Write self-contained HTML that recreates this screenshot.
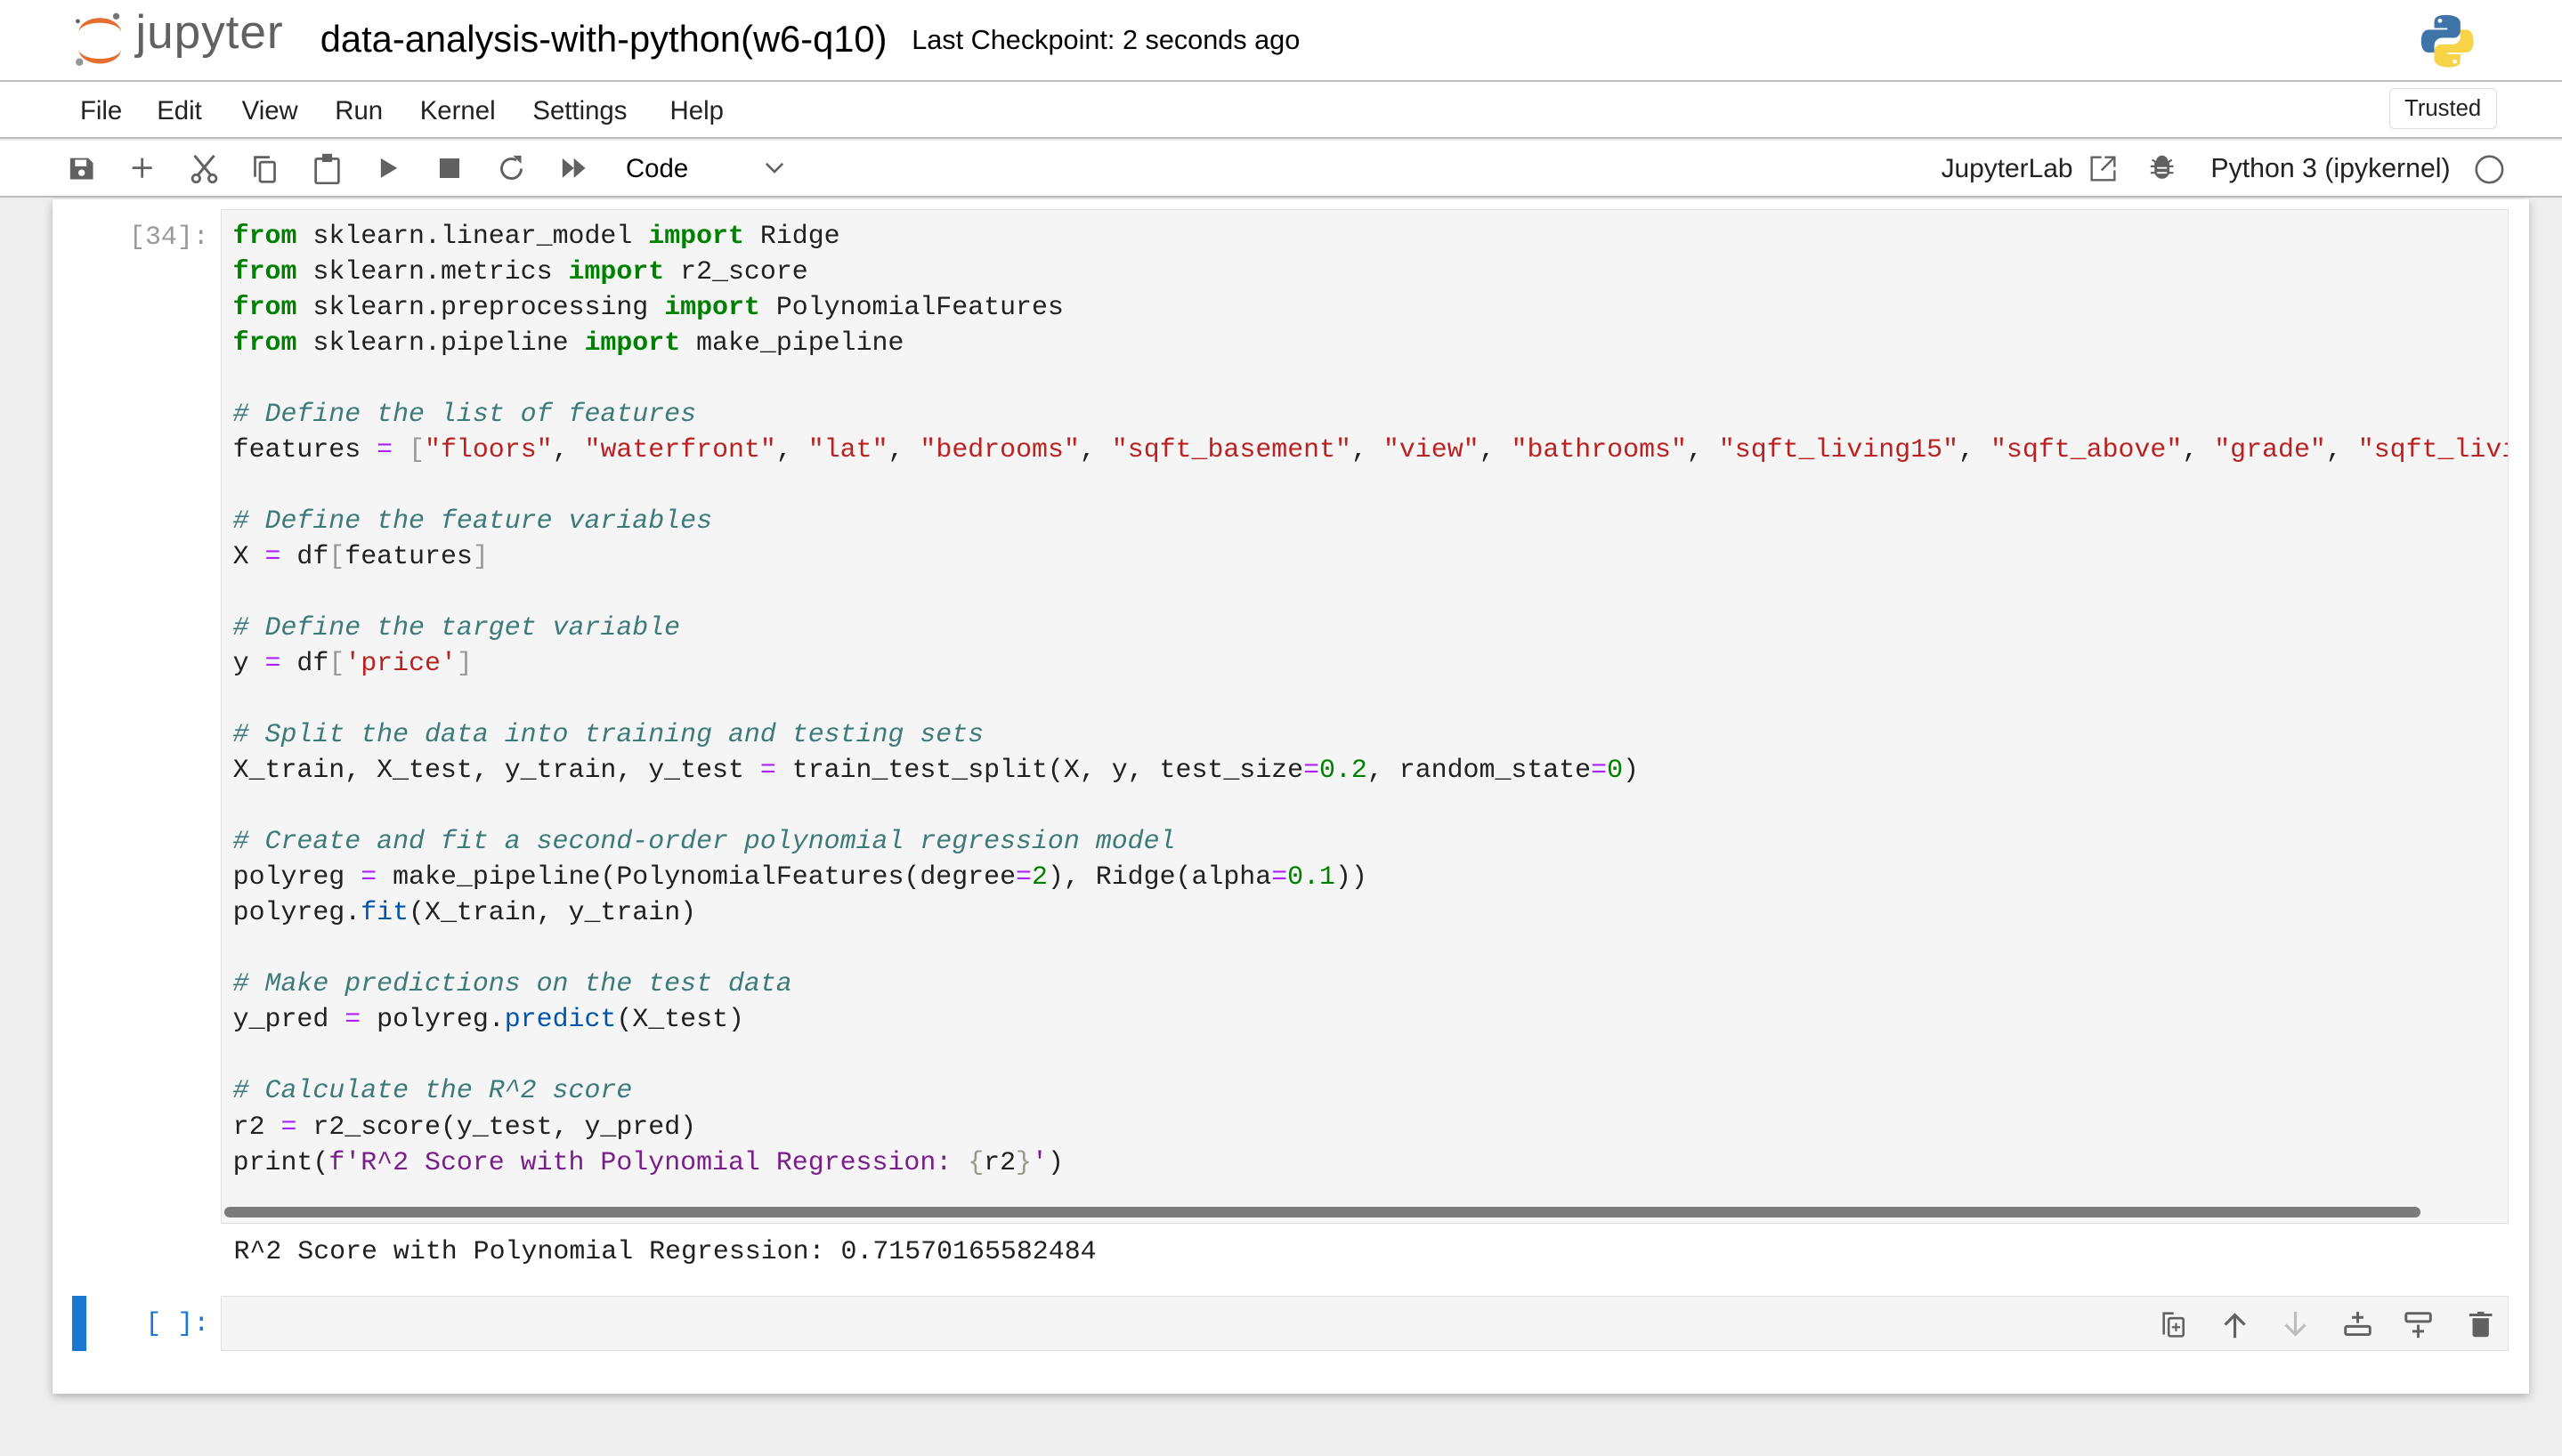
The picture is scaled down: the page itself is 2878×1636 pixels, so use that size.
<!DOCTYPE html>
<html><head><meta charset="utf-8"><style>
html,body{margin:0;padding:0}
body{width:1568px;height:891.4px;zoom:1.8355;background:#eee;position:relative;overflow:hidden;font-family:"Liberation Sans",sans-serif;color:#000}
.a{position:absolute}
.hdr{left:0;top:0;width:1568px;height:49px;background:#fff;border-bottom:1.5px solid #bdbdbd}
.menu{left:0;top:50px;width:1568px;height:34px;background:#fff;border-bottom:1.5px solid #bdbdbd}
.tb{left:0;top:86px;width:1568px;height:34px;background:#fff;border-bottom:1.5px solid #bdbdbd}
.menu span{position:absolute;top:9px;font-size:16px;color:#222}
.panel{left:32px;top:122px;width:1516px;height:731px;background:#fff;box-shadow:0 2px 5px rgba(0,0,0,.25)}
.cell{left:135px;top:128px;width:1399px;height:620px;background:#f5f5f5;border:1px solid #e0e0e0;overflow:hidden}
pre{margin:0;font-family:"Liberation Mono",monospace;font-size:16.3px;line-height:21.8px;color:#212121}
.k{color:#008000;font-weight:bold}.s{color:#ba2121}.c{color:#3d7a7a;font-style:italic}.o{color:#aa22ff}.n{color:#008000}.p{color:#0055aa}.g{color:#999}.f{color:#7a1f8a}.b{color:#998}
svg{position:absolute}
</style></head><body>
<div class="a hdr"></div>
<svg style="left:44px;top:6px" width="34" height="36" viewBox="0 0 34 36"><path d="M4 14 A13 9 0 0 1 30 14 A13 6 0 0 0 4 14Z" fill="#e46e2e"/><path d="M4 24 A13 9 0 0 0 30 24 A13 6 0 0 1 4 24Z" fill="#e46e2e"/><circle cx="27" cy="4" r="2" fill="#767677"/><circle cx="4.5" cy="32" r="2.3" fill="#989798"/><circle cx="3.5" cy="7" r="1.3" fill="#616262"/></svg>
<div class="a" style="left:83px;top:3px;font-size:29px;color:#616161;letter-spacing:.5px">jupyter</div>
<div class="a" style="left:196px;top:11px;font-size:22.7px">data-analysis-with-python(w6-q10)</div>
<div class="a" style="left:558px;top:15px;font-size:16.7px">Last Checkpoint: 2 seconds ago</div>
<svg style="left:1481px;top:8px" width="34" height="34" viewBox="0 0 34 34"><path d="M16 1C9 1 9 4 9 6v3h8v1H6c-3 0-5 2-5 7s2 7 5 7h3v-4c0-3 2-5 5-5h7c2 0 4-2 4-4V6c0-3-3-5-9-5z" fill="#3f74a8"/><path d="M18 33c7 0 7-3 7-5v-3h-8v-1h11c3 0 5-2 5-7s-2-7-5-7h-3v4c0 3-2 5-5 5h-7c-2 0-4 2-4 4v5c0 3 3 5 9 5z" fill="#f7d348"/><circle cx="12.5" cy="4.5" r="1.3" fill="#fff"/><circle cx="21.5" cy="29.5" r="1.3" fill="#fff"/></svg>
<div class="a menu"><span style="left:49px">File</span><span style="left:96px">Edit</span><span style="left:148px">View</span><span style="left:205px">Run</span><span style="left:257px">Kernel</span><span style="left:326px">Settings</span><span style="left:410px">Help</span>
<div class="a" style="left:1462px;top:4px;width:65px;height:24px;border:1px solid #ddd;border-radius:3px;font-size:14px;text-align:center;line-height:24px;color:#222">Trusted</div></div>
<div class="a tb">
<svg style="left:42px;top:9px" width="16" height="16" viewBox="0 0 16 16"><path d="M1 2h11l3 3v10H1z" fill="#616161"/><rect x="4" y="3" width="7" height="4" fill="#fff"/><circle cx="8" cy="11" r="2" fill="#fff"/></svg>
<svg style="left:79px;top:9px" width="16" height="16"><path d="M8 2v12M2 8h12" stroke="#616161" stroke-width="1.5"/></svg>
<svg style="left:116px;top:8px" width="18" height="18" viewBox="0 0 18 18"><path d="M3 1l10 12M15 1L5 13" stroke="#616161" stroke-width="1.6" fill="none"/><circle cx="4" cy="15" r="2.3" stroke="#616161" stroke-width="1.5" fill="none"/><circle cx="14" cy="15" r="2.3" stroke="#616161" stroke-width="1.5" fill="none"/></svg>
<svg style="left:153px;top:8px" width="18" height="18"><path d="M3 14V2h9" stroke="#616161" stroke-width="1.5" fill="none"/><rect x="6" y="5" width="9" height="12" rx="1" stroke="#616161" stroke-width="1.5" fill="none"/></svg>
<svg style="left:191px;top:7px" width="18" height="20"><rect x="2" y="4" width="14" height="15" rx="1" stroke="#616161" stroke-width="1.5" fill="none"/><rect x="6" y="1" width="6" height="5" fill="#616161"/></svg>
<svg style="left:232px;top:10px" width="12" height="14"><path d="M1 1l10 6-10 6z" fill="#616161"/></svg>
<svg style="left:269px;top:11px" width="12" height="12"><rect width="12" height="12" fill="#616161"/></svg>
<svg style="left:304px;top:8px" width="18" height="18"><path d="M15 9A6 6 0 1 1 12 3.8" stroke="#616161" stroke-width="1.6" fill="none"/><path d="M10 1h5v5z" fill="#616161"/></svg>
<svg style="left:343px;top:10px" width="16" height="14"><path d="M1 1l7 6-7 6zM8 1l7 6-7 6z" fill="#616161"/></svg>
<div class="a" style="left:383px;top:8px;font-size:16px">Code</div>
<svg style="left:468px;top:13px" width="12" height="8"><path d="M1 1l5 5 5-5" stroke="#616161" stroke-width="1.4" fill="none"/></svg>
<div class="a" style="left:1188px;top:8px;font-size:16.3px;color:#222">JupyterLab</div>
<svg style="left:1278px;top:8px" width="18" height="18"><path d="M8 2H2v14h14v-6M10 2h6v6M16 2L8 10" stroke="#616161" stroke-width="1.3" fill="none"/></svg>
<svg style="left:1315px;top:9px" width="16" height="16" viewBox="0 0 16 16"><path d="M4 5h8v5a4 4 0 0 1-8 0z M5 4a3 3 0 0 1 6 0z M1 7h3M12 7h3M1 11h3M12 11h3M2 3l3 2M14 3l-3 2" fill="#616161" stroke="#616161" stroke-width="1.2"/><path d="M5 8h6M5 11h6" stroke="#fff"/></svg>
<div class="a" style="left:1353px;top:8px;font-size:16.5px;color:#222">Python 3 (ipykernel)</div>
<svg style="left:1514px;top:8px" width="19" height="19"><circle cx="9.5" cy="9.5" r="8" stroke="#616161" stroke-width="1.4" fill="none"/></svg>
</div>
<div class="a panel"></div>
<pre class="a" style="left:79px;top:134px;color:#999">[34]:</pre>
<div class="a cell"><pre style="position:absolute;left:7px;top:5px;white-space:pre"><span class="k">from</span> sklearn.linear_model <span class="k">import</span> Ridge
<span class="k">from</span> sklearn.metrics <span class="k">import</span> r2_score
<span class="k">from</span> sklearn.preprocessing <span class="k">import</span> PolynomialFeatures
<span class="k">from</span> sklearn.pipeline <span class="k">import</span> make_pipeline

<span class="c"># Define the list of features</span>
features <span class="o">=</span> <span class="g">[</span><span class="s">"floors"</span>, <span class="s">"waterfront"</span>, <span class="s">"lat"</span>, <span class="s">"bedrooms"</span>, <span class="s">"sqft_basement"</span>, <span class="s">"view"</span>, <span class="s">"bathrooms"</span>, <span class="s">"sqft_living15"</span>, <span class="s">"sqft_above"</span>, <span class="s">"grade"</span>, <span class="s">"sqft_living"</span><span class="g">]</span>

<span class="c"># Define the feature variables</span>
X <span class="o">=</span> df<span class="g">[</span>features<span class="g">]</span>

<span class="c"># Define the target variable</span>
y <span class="o">=</span> df<span class="g">[</span><span class="s">'price'</span><span class="g">]</span>

<span class="c"># Split the data into training and testing sets</span>
X_train, X_test, y_train, y_test <span class="o">=</span> train_test_split(X, y, test_size<span class="o">=</span><span class="n">0.2</span>, random_state<span class="o">=</span><span class="n">0</span>)

<span class="c"># Create and fit a second-order polynomial regression model</span>
polyreg <span class="o">=</span> make_pipeline(PolynomialFeatures(degree<span class="o">=</span><span class="n">2</span>), Ridge(alpha<span class="o">=</span><span class="n">0.1</span>))
polyreg.<span class="p">fit</span>(X_train, y_train)

<span class="c"># Make predictions on the test data</span>
y_pred <span class="o">=</span> polyreg.<span class="p">predict</span>(X_test)

<span class="c"># Calculate the R^2 score</span>
r2 <span class="o">=</span> r2_score(y_test, y_pred)
print(<span class="f">f'R^2 Score with Polynomial Regression: </span><span class="b">{</span>r2<span class="b">}</span><span class="f">'</span>)</pre>
<div class="a" style="left:2px;top:610px;width:1344px;height:7px;border-radius:4px;background:#7b7b7b"></div>
</div>
<pre class="a" style="left:143px;top:755px">R^2 Score with Polynomial Regression: 0.71570165582484</pre>
<div class="a" style="left:44px;top:793px;width:9px;height:34px;background:#1976d2"></div>
<pre class="a" style="left:89px;top:799px;color:#1976d2">[ ]:</pre>
<div class="a" style="left:135px;top:793px;width:1399px;height:33px;background:#f5f5f5;border:1px solid #e0e0e0"></div>
<svg style="left:1322px;top:802px" width="18" height="18"><path d="M2 15V2h6" stroke="#616161" stroke-width="1.4" fill="none"/><rect x="5" y="5" width="9" height="11" rx="1" stroke="#616161" stroke-width="1.4" fill="none"/><path d="M9.5 8v5M7 10.5h5" stroke="#616161" stroke-width="1.2"/></svg>
<svg style="left:1359px;top:802px" width="18" height="18"><path d="M9 17V3M3 9l6-6 6 6" stroke="#616161" stroke-width="1.7" fill="none"/></svg>
<svg style="left:1396px;top:802px" width="18" height="18"><path d="M9 1v14M3 9l6 6 6-6" stroke="#bdbdbd" stroke-width="1.7" fill="none"/></svg>
<svg style="left:1434px;top:802px" width="18" height="18"><rect x="1.5" y="10" width="15" height="5" rx="1" stroke="#616161" stroke-width="1.6" fill="none"/><path d="M9 1v7M5.5 4.5h7" stroke="#616161" stroke-width="1.6"/></svg>
<svg style="left:1471px;top:802px" width="18" height="18"><rect x="1.5" y="2" width="15" height="5" rx="1" stroke="#616161" stroke-width="1.6" fill="none"/><path d="M9 9v8M5.5 13h7" stroke="#616161" stroke-width="1.6"/></svg>
<svg style="left:1510px;top:802px" width="16" height="18"><path d="M1 3h14" stroke="#616161" stroke-width="1.6"/><path d="M3 5h10v10a1.5 1.5 0 0 1-1.5 1.5h-7A1.5 1.5 0 0 1 3 15z" fill="#616161"/><rect x="6" y="1" width="4" height="2" fill="#616161"/></svg>
</body></html>
